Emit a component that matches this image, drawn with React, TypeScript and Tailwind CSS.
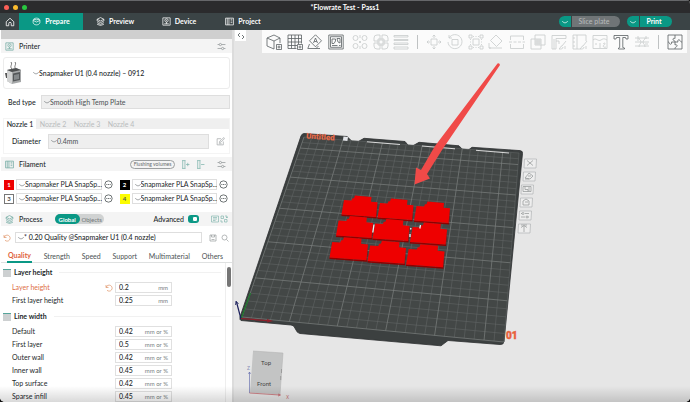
import type { ReactNode } from "react";

const Icon = ({
  d,
  className = "size-4",
  weight = 1.3,
}: {
  d: string;
  className?: string;
  weight?: number;
}) => (
  <svg
    viewBox="0 0 16 16"
    className={`shrink-0 ${className}`}
    fill="none"
    stroke="currentColor"
    strokeWidth={weight}
    strokeLinejoin="round"
    aria-hidden="true"
  >
    <path d={d} />
  </svg>
);

const icons = {
  home: "M2 7.5 8 2l6 5.5V14h-4v-3.5a2 2 0 0 0-4 0V14H2z",
  prepare: "M2 6c0-2 3-4 6-4s6 2 6 4v4c0 2-3 4-6 4s-6-2-6-4zM2 6l6 3 6-3M3 4l5 1 5-1",
  layers: "M8 1l6 3-6 3-6-3zM2 7l6 3 6-3M2 10l6 3 6-3M2 13l6 2 6-2M2 4v3M14 4v3",
  device: "M1.5 1.5h13v13h-13zM5 6a3 3 0 1 0 6 0 3 3 0 0 0-6 0M7 6h2M4 12h8M8 9v3",
  project: "M1 2h14v12H1zM4 2v12M7 2v12M10 4h3M10 7h3M10 10h3",
  sliders: "M1 4.5h3M8 4.5h7M4 4.5a2 2 0 1 0 4 0 2 2 0 0 0-4 0M1 11.5h7M12 11.5h3M8 11.5a2 2 0 1 0 4 0 2 2 0 0 0-4 0",
  chevron: "M1 6c2 4 4 2 7 5 3-3 5-1 7-5",
  edit: "M13 8v6H2V3h7M6 10l1-3 7-6 1 2-6 6zM5 12h5",
  reset: "M2 2v5h5M2.5 6.5A6 6 0 1 1 4 12.5",
  save: "M2 2h12v12H2zM5 2v4h6V2M5 11h6",
  search: "M2 7a5 5 0 1 0 10 0A5 5 0 0 0 2 7M11 11l4 4",
  dots: "M1.5 8a6.5 6.5 0 1 0 13 0 6.5 6.5 0 0 0-13 0M4 8h2M7 8h2M10 8h2",
  add: "M2 1h6M2 15h6M3 1v14M7 1v14M9 8h6M12 5v6",
  remove: "M2 1h6M2 15h6M3 1v14M7 1v14M9 8h6",
  list: "M1 2h14v12H1zM4 5h8M4 8h8M4 11h5",
  compare: "M2 2h5v5H2zM9 9h5v5H9zM10 2h4v4M2 10v4h4M12 4l2 2 1-2",
  collapse: "M6 2L2 6l4 4M10 6l4 4-4 4",
};

type Tool = { label: string; d: string };

const addTools: Tool[] = [
  { label: "Add", d: "M1 4l7-3 6 3v5M1 4v8l7 3M1 4l7 3 6-3M8 7v8M10.500 10.500h5v5h-5zM13 11.500v3M11.500 13h3" },
  { label: "Add plate", d: "M1 1h13.500v8.500M1 1v13.500h8.500M4.500 1v13.500M8 1v13.500M11.500 1v9M1 4.500h13.500M1 8h13.500M1 11.500h9M10.500 10.500h5v5h-5zM13 11.500v3M11.500 13h3" },
  { label: "Auto orient", d: "M8.500 .8l6 6-6 6-6-6zM6.500 9l2-5 2 5M7.300 7.500h2.400M2.500 10L.800 14.500H13M11.500 12l-2.500 2.500" },
  { label: "Arrange", d: "M.8 1h14.400v14H.8zM2.500 2.700h11v10.600h-11zM4 9.500V5h3.500v2L6 9.500zM9 4.500h3V9l-2-1zM4 11.500h5.500M11 11.500h1.500" },
];

const splitTools: Tool[] = [
  { label: "Split to objects", d: "M1 4a2.500 2.500 0 1 0 5 0 2.500 2.500 0 0 0-5 0M10 4a2.500 2.500 0 1 0 5 0 2.500 2.500 0 0 0-5 0M1 12a2.500 2.500 0 1 0 5 0 2.500 2.500 0 0 0-5 0M10 12a2.500 2.500 0 1 0 5 0 2.500 2.500 0 0 0-5 0M7 7l2 2M9 7L7 9M8 1v3M8 12v3" },
  { label: "Split to parts", d: "M4 1h3v6H1V4a3 3 0 0 1 3-3zM9 1h3a3 3 0 0 1 3 3v3H9zM1 9h6v6H4a3 3 0 0 1-3-3zM9 9h6v3a3 3 0 0 1-3 3H9zM5 5h6v6H5z" },
  { label: "Variable layer height", d: "M1 1.500h14v1.500H1zM1 5.500h14v1H1zM1 9h14v1.500H1zM1 13h14v2H1z" },
];

const editTools: Tool[] = [
  { label: "Move", d: "M5 5h6v6H5zM8 4V1M6.500 2.500L8 1l1.500 1.500M8 12v3M6.500 13.500L8 15l1.500-1.500M4 8H1M2.500 6.500L1 8l1.500 1.500M12 8h3M13.500 6.500L15 8l-1.500 1.500" },
  { label: "Rotate", d: "M2 4a7 7 0 1 1-1 4M2 1v3h3M5 5.500h6v5.500H5z" },
  { label: "Scale", d: "M5 5h6v6H5zM1 1h3v3H1zM12 1h3v3h-3zM1 12h3v3H1zM12 12h3v3h-3zM5 2.500h1M7.500 2.500h1M10 2.500h1M5 13.500h1M7.500 13.500h1M10 13.500h1M2.500 5v1M2.500 7.500v1M2.500 10v1M13.500 5v1M13.500 7.500v1M13.500 10v1" },
  { label: "Place on face", d: "M8 1l6 6-5.500 5.500-6-6zM1 9v5h13M3 14l-2 0" },
  { label: "Cut", d: "M1.500 6V2h13v4M1.500 10v4.500h13V10M0 8h3M4.500 8h3M9 8h3M13.500 8H16" },
  { label: "Mesh boolean", d: "M1 5h10v10H1zM5 1h10v10H5zM5 7h6M5 9h6M7 5v6M9 5v6" },
  { label: "Support painting", d: "M1 1.500h14v3H5V15H1zM5 7h3v3M3 5v10M15 7l-4 5M11 12c-2 0-1 2-3 3 2 0 4 0 4-2M14 12v3" },
  { label: "Seam painting", d: "M1 1h13v6M1 1v14h7M5 1v14M1 4h2M1 8h2M1 12h2M15 7l-4 5M11 12c-2 0-1 2-3 3 2 0 4 0 4-2M14 12v3" },
  { label: "Color painting", d: "M1 1.500h14v13H1zM1 6c3-3 5 2 8 0s4-1 6 0M4 9v2M8 9v5M11 10c2-2 3 0 1 1s0 3 2 2" },
  { label: "Text", d: "M1 1.500h14V5h-2l-.5-1.500H9.800v10l1.700.5v1h-6v-1l1.200-.5v-10H3.500L3 5H1z" },
  { label: "Measure", d: "M1 4h14M1 8h14M1 12h14M4 2v3M12 2v3M5 4c0 2 2 2 2 4s-2 2-2 5M11 4c0 2-2 2-2 4s2 2 2 5M3 6h2M11 10h3" },
];

const assemblyTool: Tool = {
  label: "Assembly view",
  d: "M1 1h14v14H1zM8 1v3.500c-2-1-3 1.500-1 2 1 .3 1 1 1 1.500M8 8H4.500c1 2-1.500 3-2 1.500C2.200 8.500 2 8 1 8M8 8v3c2-1 3 1 1 2-1 .5-1 1-1 2M8 8h3c-1-2 1-3 2-1.500.5 1 1 1.500 2 1.500",
};

const ToolButton = ({ tool, disabled = false }: { tool: Tool; disabled?: boolean }) => (
  <button aria-label={tool.label} disabled={disabled} className={disabled ? "text-[#c8cbcc]" : "text-[#5a6163]"}>
    <Icon d={tool.d} weight={0.8} />
  </button>
);

const navTabs = [
  { label: "Prepare", icon: icons.prepare },
  { label: "Preview", icon: icons.layers },
  { label: "Device", icon: icons.device },
  { label: "Project", icon: icons.project },
];

const Header = () => (
  <header className="text-white">
    <div className="relative flex h-[13px] items-center justify-center border-t border-[#66676a] bg-[#2b2b2d]">
      <div className="absolute left-1 flex gap-1">
        <span className="size-[5px] rounded-full bg-[#fc5f57]" />
        <span className="size-[5px] rounded-full bg-[#fcbc2e]" />
        <span className="size-[5px] rounded-full bg-[#29c840]" />
      </div>
      <h1 className="font-bold">*Flowrate Test - Pass1</h1>
    </div>
    <div className="flex h-[17px] items-center bg-[#3b4446]">
      <button aria-label="Home" className="flex w-[19px] justify-center">
        <Icon d={icons.home} className="size-[10px]" />
      </button>
      {navTabs.map((tab, i) => (
        <button
          key={tab.label}
          className={`flex h-full w-16 items-center justify-center gap-1 font-bold ${i === 0 ? "bg-[#0a9885]" : ""}`}
        >
          <Icon d={tab.icon} className="size-[9px]" />
          {tab.label}
        </button>
      ))}
      <div className="ml-auto mr-[18px] flex h-[11px] gap-[7px]">
        <div className="flex gap-px">
          <button aria-label="Slice options" className="rounded-l-full bg-[#0a9885] px-[3px]">
            <Icon d={icons.chevron} className="size-[6px]" weight={2} />
          </button>
          <button className="w-12 rounded-r-full bg-[#707577] pr-1 text-[#b9bcbd]">Slice plate</button>
        </div>
        <div className="flex gap-px">
          <button aria-label="Print options" className="rounded-l-full bg-[#0a9885] px-[3px]">
            <Icon d={icons.chevron} className="size-[6px]" weight={2} />
          </button>
          <button className="w-8 rounded-r-full bg-[#0a9885] pr-1 font-bold">Print</button>
        </div>
      </div>
    </div>
  </header>
);

const SectionHeader = ({ icon, title, children }: { icon: string; title: string; children: ReactNode }) => (
  <div className="flex h-[14px] items-center bg-[#f4f4f4] px-1">
    <Icon d={icon} className="size-[9px] text-[#6fa8a1]" />
    <h2 className="ml-[5px] font-medium">{title}</h2>
    {children}
  </div>
);

const Select = ({ label, value, className = "" }: { label: string; value: string; className?: string }) => (
  <div className={`flex min-w-0 items-center border border-[#dedede] pl-[2px] ${className}`}>
    <Icon d={icons.chevron} className="size-[6px] text-[#7c8284]" weight={2} />
    <select aria-label={label} className="-mr-px min-w-0 flex-1 appearance-none bg-transparent outline-none">
      <option>{value}</option>
    </select>
  </div>
);

const PrinterPanel = () => (
  <section>
    <SectionHeader icon={icons.device} title="Printer">
      <button aria-label="Printer settings" className="ml-auto mr-[2px] text-[#8f9496]">
        <Icon d={icons.sliders} className="size-[9px]" />
      </button>
    </SectionHeader>
    <div className="mx-[2px] mt-1 flex h-8 items-center rounded-[3px] border border-[#ececec] pl-px">
      {/* Printer thumbnail */}
      <svg viewBox="0 0 18 24" className="h-6 w-[18px]" aria-hidden="true">
        <path d="M7 8c-3-3 1-4-1-7M11 8c-3-3 1-4-1-7" fill="none" stroke="#777" strokeWidth="1" />
        <path d="M2 9l9-2 5 2v12l-9 2-5-3z" fill="#a5a7a8" />
        <path d="M2 9l5 2v12l-5-3z" fill="#d2d3d3" />
        <path d="M2 9l9-2 5 2-9 2z" fill="#4d4f50" />
        <path d="M8 12.500l7-1.500v8l-7 1.500z" fill="#55585a" />
        <path d="M9 14l5-1v5l-5 1z" fill="#85898b" />
        <path d="M0 12h2v5H1z" fill="#555" />
      </svg>
      <Select label="Printer" value="Snapmaker U1 (0.4 nozzle) – 0912" className="ml-2 flex-1 border-none font-medium" />
    </div>
    <div className="mt-[6px] flex h-[14px] items-stretch pl-[7px] pr-[2px]">
      <span className="flex w-[33px] items-center font-medium">Bed type</span>
      <Select label="Bed type" value="Smooth High Temp Plate" className="flex-1 bg-[#efefef] text-[#4c5254]" />
    </div>
    <div className="mx-[2px] mt-[9px] border border-[#f4f4f4]">
      <div className="flex h-[10px] items-center bg-[#efefef]">
        <button className="h-full w-8 bg-white font-medium">Nozzle 1</button>
        {["Nozzle 2", "Nozzle 3", "Nozzle 4"].map((n) => (
          <button key={n} disabled className="w-[34px] text-[#b9bcbd]">
            {n}
          </button>
        ))}
      </div>
      <div className="flex h-6 items-center pl-2 pr-1">
        <span className="w-9 font-medium">Diameter</span>
        <Select label="Diameter" value="0.4mm" className="h-[15px] flex-1 bg-[#efefef] text-[#4c5254]" />
        <button aria-label="Edit diameter" className="ml-[7px] text-[#a6aaab]">
          <Icon d={icons.edit} className="size-[9px]" />
        </button>
      </div>
    </div>
  </section>
);

const filaments = [
  { n: 1, swatch: "bg-[#ee0000] text-white border-[#ee0000]" },
  { n: 2, swatch: "bg-black text-white border-black" },
  { n: 3, swatch: "bg-white text-[#444] border-[#777]" },
  { n: 4, swatch: "bg-[#fcfc00] text-[#555] border-[#fcfc00]" },
];

const FilamentPanel = () => (
  <section className="mt-[3px]">
    <SectionHeader icon={icons.project} title="Filament">
      <button className="ml-auto flex h-[9px] w-[45px] shrink-0 items-center justify-center whitespace-nowrap rounded-full border border-[#9b9fa0] text-[5px] text-[#666c6e]">
        Flushing volumes
      </button>
      <button aria-label="Add filament" className="ml-[6px] text-[#7db3ac]">
        <Icon d={icons.add} className="size-[9px]" />
      </button>
      <button aria-label="Remove filament" className="ml-[6px] text-[#7db3ac]">
        <Icon d={icons.remove} className="size-[9px]" />
      </button>
      <button aria-label="Filament settings" className="ml-3 mr-[2px] text-[#8f9496]">
        <Icon d={icons.sliders} className="size-[9px]" />
      </button>
    </SectionHeader>
    <div className="mt-2 grid grid-cols-2 gap-x-[7px] gap-y-[3px] pl-[3px] pr-1">
      {filaments.map((f) => (
        <div key={f.n} className="flex h-[11px] items-center">
          <span className={`flex size-[10px] shrink-0 items-center justify-center border text-[6px] font-bold ${f.swatch}`}>
            {f.n}
          </span>
          <Select label={`Filament ${f.n}`} value="Snapmaker PLA SnapSp..." className="ml-[2px] h-full flex-1" />
          <button aria-label={`Edit filament ${f.n}`} className="ml-[2px] text-[#3d4446]">
            <Icon d={icons.dots} className="size-[9px]" />
          </button>
        </div>
      ))}
    </div>
  </section>
);

const Field = ({ label, value, unit, changed = false }: { label: string; value: string; unit: string; changed?: boolean }) => (
  <label className="flex h-[13px] items-center pl-[11px]">
    <span className={`w-[94px] ${changed ? "text-[#dd6e48]" : ""}`}>{label}</span>
    {changed && <Icon d={icons.reset} className="-ml-px size-2 text-[#dd8a58]" />}
    <span className={`flex h-[11px] w-[57px] items-center border border-[#e0e0e0] px-[3px] ${changed ? "ml-[2px]" : "ml-[9px]"}`}>
      <input defaultValue={value} className="w-0 min-w-0 flex-1 bg-transparent font-medium outline-none" />
      <span className="text-[6px] text-[#777d7f]">{unit}</span>
    </span>
  </label>
);

const GroupTitle = ({ title }: { title: string }) => (
  <h3 className="flex h-[17px] items-center gap-[3px] pl-[2px] pr-1 font-bold">
    <svg viewBox="0 0 8 8" className="size-2" aria-hidden="true">
      <path d="M0 1h8M0 3h8M0 5h8M0 7h8" stroke="#9ba1a3" strokeWidth="1" />
      <path d="M0 .5h8" stroke="#55a49a" strokeWidth="1" />
    </svg>
    {title}
    <span className="ml-1 h-px flex-1 bg-[#f1f1f1]" />
  </h3>
);

const lineWidths = [
  ["Default", "0.42"],
  ["First layer", "0.5"],
  ["Outer wall", "0.42"],
  ["Inner wall", "0.45"],
  ["Top surface", "0.42"],
  ["Sparse infill", "0.45"],
];

const ProcessPanel = () => (
  <section className="mt-2 flex min-h-0 flex-1 flex-col">
    <SectionHeader icon={icons.layers} title="Process">
      <div className="ml-3 flex h-[10px] shrink-0 items-center rounded-full bg-[#d0d2d2] text-[6px]">
        <button className="h-full w-[25px] rounded-full bg-[#0a9885] font-bold text-white">Global</button>
        <button className="w-6 text-[#71777a]">Objects</button>
      </div>
      <label className="ml-auto flex items-center gap-1 font-medium">
        Advanced
        <span className="relative flex">
          <input type="checkbox" defaultChecked className="peer h-2 w-[11px] appearance-none rounded-[3px] bg-[#aaa] checked:bg-[#0a9885]" />
          <span className="pointer-events-none absolute right-px top-px size-[6px] rounded-[2px] border border-[#0a9885] bg-white" />
        </span>
      </label>
      <button aria-label="Parameter list" className="ml-3 text-[#7db3ac]">
        <Icon d={icons.list} className="size-2" />
      </button>
      <button aria-label="Compare presets" className="ml-px text-[#7db3ac]">
        <Icon d={icons.compare} className="size-2" />
      </button>
    </SectionHeader>
    <div className="mt-[6px] flex h-[11px] items-center px-[2px]">
      <button aria-label="Reset preset" className="text-[#dd8a58]">
        <Icon d={icons.reset} className="size-2" />
      </button>
      <Select label="Process preset" value="* 0.20 Quality @Snapmaker U1 (0.4 nozzle)" className="ml-1 h-full flex-1 font-medium" />
      <button aria-label="Save preset" className="ml-[7px] text-[#8f9496]">
        <Icon d={icons.save} className="size-2" />
      </button>
      <button aria-label="Search preset" className="ml-1 mr-px text-[#8f9496]">
        <Icon d={icons.search} className="size-2" />
      </button>
    </div>
    <nav className="mt-[7px] flex h-[13px] justify-between border-b border-[#dfe1e1] pl-[6px] pr-[9px] text-[#4c5254]">
      <button className="-mb-px border-b-2 border-[#0a9885] px-px font-bold text-[#e0623a]">Quality</button>
      <button>Strength</button>
      <button>Speed</button>
      <button>Support</button>
      <button>Multimaterial</button>
      <button>Others</button>
    </nav>
    <div className="flex min-h-0 flex-1 overflow-hidden">
      <div className="flex-1 border-r border-[#eeeeee] pt-px">
        <GroupTitle title="Layer height" />
        <Field label="Layer height" value="0.2" unit="mm" changed />
        <Field label="First layer height" value="0.25" unit="mm" />
        <div className="pt-px">
          <GroupTitle title="Line width" />
        </div>
        {lineWidths.map(([label, value]) => (
          <Field key={label} label={label} value={value} unit="mm or %" />
        ))}
      </div>
      <div className="flex w-[6px] justify-center pt-1">
        <span className="h-5 w-1 rounded-full bg-[#757575]" />
      </div>
    </div>
  </section>
);

// Bed corners on screen: top left, top right, bottom right, bottom left
const corners = [
  [304, 137],
  [519, 153],
  [504, 342],
  [242, 317],
];

const project = (u: number, v: number) => {
  const [[x0, y0], [x1, y1], [x2, y2], [x3, y3]] = corners;
  const dx1 = x1 - x2, dx2 = x3 - x2, sx = x0 - x1 + x2 - x3;
  const dy1 = y1 - y2, dy2 = y3 - y2, sy = y0 - y1 + y2 - y3;
  const det = dx1 * dy2 - dx2 * dy1;
  const g = (sx * dy2 - dx2 * sy) / det;
  const h = (dx1 * sy - sx * dy1) / det;
  const w = g * u + h * v + 1;
  const x = ((x1 - x0 + g * x1) * u + (x3 - x0 + h * x3) * v + x0) / w;
  const y = ((y1 - y0 + g * y1) * u + (y3 - y0 + h * y3) * v + y0) / w;
  return `${x.toFixed(2)} ${y.toFixed(2)}`;
};

const CELLS = 27;
const gridLines = (bold: boolean) =>
  Array.from({ length: CELLS + 1 }, (_, i) => i)
    .filter((i) => (i % 5 === 0) === bold)
    .map((i) => {
      const t = i / CELLS;
      return `M${project(t, 0)}L${project(t, 1)}M${project(0, 1 - t)}L${project(1, 1 - t)}`;
    })
    .join("");

const parts = [
  [341.5, 214.5, 1],
  [377.5, 217.5, 1],
  [414, 220.5, 1],
  [336, 235.5, 1.03],
  [372.5, 238.5, 1.03],
  [410, 242, 1.03],
  [329.5, 257.5, 1.07],
  [367.5, 261, 1.07],
  [406, 264.5, 1.07],
];

const plateButtons = [
  { x: 524, y: 159, d: "M3 1.500l6 5M9 1.500l-6 5" },
  { x: 523, y: 172, d: "M2 6l4-5 4 3-3 3zM5 4h3M2 7h4" },
  { x: 521, y: 185, d: "M2 1.500h8v5H2zM4 1.500v3h3v2M8 2v4" },
  { x: 520, y: 198, d: "M3 7V3l3-2 3 2v4zM5 4h3" },
  { x: 519, y: 211, d: "M2 2.500h1M6 2.500h4M3 2.500a1 1 0 1 0 2 0 1 1 0 0 0-2 0M2 6h4M9 6h1M7 6a1 1 0 1 0 2 0 1 1 0 0 0-2 0" },
  { x: 518, y: 224, d: "M6 8V2M3 3.500L6 1.500l3 2M3 1h6" },
];

const Scene = () => (
  <svg
    viewBox="234 30 456 372"
    className="absolute inset-0 size-full font-['Roboto',sans-serif]"
    role="img"
    aria-label="Build plate"
  >
    <path
      d="M304 133.500L347 136.500L353 142.300H357L364 138.300L405 141.500L409 146.300H412L419 142.300L459 145.800L464 151H467L472 147.300L520 150.600Q523 151 522.500 153.500L504 341.500Q503.500 345 500 344.500L448 340.500L441 345.800L300 333.500Q297 333 296 330L294 326.500Q293.500 325.500 291 325L241 320.500Q239.500 320 240 317L301 136Q302 133.500 304 133.500Z"
      fill="#3c4040"
      stroke="#2c2f30"
      strokeWidth="0.8"
    />
    <path d={`M${project(0, 0)}L${project(1, 0)}L${project(1, 1)}L${project(0, 1)}Z`} fill="#434746" />
    <path d={gridLines(false)} stroke="#676b6a" strokeWidth="0.5" fill="none" />
    <path d={gridLines(true)} stroke="#7d8180" strokeWidth="0.7" fill="none" />
    <path d="M367 141.800l33 2.700M422 146l33 2.800M476 150.300l33 2.700" stroke="#e8e8e8" strokeWidth="0.9" />
    <path d="M343.500 136.500l4.500.4-.6 4-4.500-.4z" fill="#e2e4e8" />
    <text x="306" y="138.500" fontSize="8" fontWeight="900" fill="#e86a48" transform="rotate(4 306 138)">
      Untitled
    </text>

    <path d="M241 319L250.500 293" stroke="#1c7a2c" strokeWidth="1.200" />
    <path d="M241 319L236.500 302" stroke="#1b1f5c" strokeWidth="1.200" />
    <path d="M235.500 305l.5-4 2.500 3" stroke="#1b1f5c" strokeWidth="0.8" fill="none" />
    <path d="M241 318.500L270 320.800M267 319.500l4 1.400-4 1" stroke="#8f1f2a" strokeWidth="1.200" fill="none" />

    {parts.map(([x, y, s]) => (
      <g key={`${x}-${y}`} transform={`translate(${x} ${y}) scale(${s})`}>
        <path d="M0 0L34.500 2.500L36 -12L36 -10.500L35 4L0 1.500Z" fill="#8e0000" />
        <path d="M0 0L2.500 -14.500L10 -14L11 -16.200L12.500 -16.200L13.500 -19L30 -17.500L29.500 -12.800L36 -12.200L34.500 2.500Z" fill="#ee0000" />
      </g>
    ))}
    <path d="M374 224.500l-1.200 8M420.500 225l-.7 3.500M411 228l-.5 1.500M410 234v3" stroke="#f4f4f4" strokeWidth="1.300" />

    <path d="M497.500 63.500Q499.500 62.500 500 65L442 150L427 174L430 178.500L414.500 184.500L416 167.500L421 170L435 146Z" fill="#f04a48" />

    {plateButtons.map((b) => (
      <g key={b.y} transform={`translate(${b.x} ${b.y})`} fill="none" stroke="#8f9394" strokeWidth="0.7">
        <path d="M0.500 0h12l-.5 9H0z" fill="#eeeeee" stroke="#b0b3b4" />
        <path d={b.d} />
      </g>
    ))}
    <text x="506" y="339" fontSize="10" fontWeight="900" fill="#e8603c" stroke="#e8603c" strokeWidth="0.4">
      01
    </text>

    {/* View cube */}
    <path d="M253 351l30 2-3 41.500-30-2z" fill="#c3c4c4" />
    <path d="M253 351l30 2M283 353l-3 41.500" stroke="#b0b1b1" strokeWidth="0.5" />
    <path d="M281.500 369v4M280.700 376v4" stroke="#8b8b8b" strokeWidth="0.7" />
    <path d="M249.500 393v-21M248.500 374l1-2 1 2" stroke="#6a72b0" strokeWidth="0.7" fill="none" />
    <path d="M249.500 393l30 2M278 394l2.500 1-2.500 1" stroke="#c0545c" strokeWidth="0.7" fill="none" />
    <g fontSize="6" fill="#3d3d3d">
      <text x="261" y="365">Top</text>
      <text x="257" y="386">Front</text>
      <text x="247" y="370" fontSize="5" fill="#8a90b8">Z</text>
      <text x="286" y="399" fontSize="5" fill="#cc7a80">X</text>
    </g>
  </svg>
);

const Workspace = () => (
  <main className="relative flex-1 overflow-hidden bg-[#e6e6e6]">
    <Scene />
    <div className="relative flex items-start">
      <button aria-label="Collapse sidebar" className="ml-px flex size-[11px] items-center justify-center bg-white text-[#4d5456]">
        <Icon d={icons.collapse} className="size-2" weight={1.6} />
      </button>
      <div className="ml-4 mr-[3px] flex h-[23px] flex-1 items-center bg-[#fbfbfb] px-1">
        <div className="flex w-[78px] justify-between">
          {addTools.map((t) => (
            <ToolButton key={t.label} tool={t} />
          ))}
        </div>
        <div className="ml-2 flex w-[57px] justify-between">
          {splitTools.map((t) => (
            <ToolButton key={t.label} tool={t} disabled />
          ))}
        </div>
        <span className="mx-2 h-[14px] w-px bg-[#bfc2c3]" />
        <div className="flex flex-1 justify-between">
          {editTools.map((t) => (
            <ToolButton key={t.label} tool={t} disabled={t.label !== "Text"} />
          ))}
        </div>
        <span className="mx-2 h-[14px] w-px bg-[#bfc2c3]" />
        <ToolButton tool={assemblyTool} />
      </div>
    </div>
  </main>
);

export default function App() {
  return (
    <div className="bg-[#111]">
      <div className="relative flex h-screen flex-col overflow-hidden rounded-b-[5px] rounded-tr-[4px] bg-white font-['Lato',sans-serif] text-[7px] leading-[9px] text-[#23282a]">
        <Header />
        <div className="flex min-h-0 flex-1">
          <aside className="flex w-[234px] shrink-0 flex-col border-r-2 border-[#dcdcdc] bg-white pl-px">
            <div className="h-[9px] shrink-0 bg-[#cfcfcf]" />
            <PrinterPanel />
            <FilamentPanel />
            <ProcessPanel />
          </aside>
          <Workspace />
        </div>
        <div className="pointer-events-none absolute inset-x-0 bottom-0 h-4 bg-gradient-to-t from-black/15 to-transparent" />
      </div>
    </div>
  );
}
